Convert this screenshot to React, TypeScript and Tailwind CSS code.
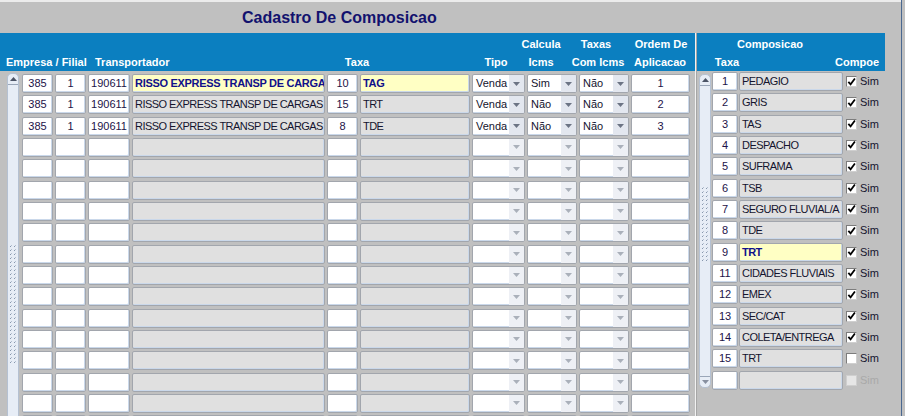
import React from 'react';

type Row = {
  emp: string;
  fil: string;
  tcod: string;
  tnome: string;
  taxa: string;
  taxaNome: string;
  tipo: string;
  calc: string;
  com: string;
  ordem: string;
  sel?: boolean;
};

const filled: Row[] = [
  { emp: '385', fil: '1', tcod: '190611', tnome: 'RISSO EXPRESS TRANSP DE CARGAS', taxa: '10', taxaNome: 'TAG', tipo: 'Venda', calc: 'Sim', com: 'Não', ordem: '1', sel: true },
  { emp: '385', fil: '1', tcod: '190611', tnome: 'RISSO EXPRESS TRANSP DE CARGAS', taxa: '15', taxaNome: 'TRT', tipo: 'Venda', calc: 'Não', com: 'Não', ordem: '2' },
  { emp: '385', fil: '1', tcod: '190611', tnome: 'RISSO EXPRESS TRANSP DE CARGAS', taxa: '8', taxaNome: 'TDE', tipo: 'Venda', calc: 'Não', com: 'Não', ordem: '3' },
];

const blank: Row = { emp: '', fil: '', tcod: '', tnome: '', taxa: '', taxaNome: '', tipo: '', calc: '', com: '', ordem: '' };

const rows: Row[] = [...filled, ...Array.from({ length: 14 }, () => blank)];

// taxa, nome, marcado, estado
const composicao: [string, string, boolean, ('sel' | 'off' | '')?][] = [
  ['1', 'PEDAGIO', true],
  ['2', 'GRIS', true],
  ['3', 'TAS', true],
  ['4', 'DESPACHO', true],
  ['5', 'SUFRAMA', true],
  ['6', 'TSB', true],
  ['7', 'SEGURO FLUVIAL/A', true],
  ['8', 'TDE', true],
  ['9', 'TRT', true, 'sel'],
  ['11', 'CIDADES FLUVIAIS', true],
  ['12', 'EMEX', true],
  ['13', 'SEC/CAT', true],
  ['14', 'COLETA/ENTREGA', true],
  ['15', 'TRT', false],
  ['', '', false, 'off'],
];

const cellBase =
  'flex h-[19px] shrink-0 items-center overflow-hidden whitespace-nowrap rounded-[2px] border border-[#a2a6ad] shadow-[inset_-1px_-1px_0_#cad8ea] text-[11px] leading-none';

// caixa alta fica mais estreita no original
const caps = 'tracking-[-0.55px]';
const selCaps = 'tracking-[-0.3px] bg-[#ffffc4] font-bold text-[#10108a]';
const grayCaps = 'tracking-[-0.55px] bg-[#e0e0e0] text-[#14142e]';

function Combo({ w, value }: { w: string; value: string }) {
  return (
    <div className={`${cellBase} ${w} bg-white`}>
      <span className="flex-1 pl-[3px] text-[#14142e]">{value}</span>
      <span className={`flex h-full w-[15px] items-center justify-center ${value ? 'bg-[#e3e7ef]' : 'bg-[#eef0f5]'}`}>
        <svg width="7" height="4" viewBox="0 0 7 4">
          <path d="M0 0h7L3.5 4z" fill={value ? '#6c7484' : '#aab0ba'} />
        </svg>
      </span>
    </div>
  );
}

function Grip({ id, h }: { id: string; h: number }) {
  return (
    <svg width="10" height={h} className="self-center">
      <defs>
        <pattern id={id} width="10" height="4" patternUnits="userSpaceOnUse">
          <rect x="2" y="2" width="1" height="1" fill="#8797ad" />
          <rect x="3" y="1" width="1" height="1" fill="#b4c0d0" />
          <rect x="6" y="2" width="1" height="1" fill="#8797ad" />
          <rect x="7" y="1" width="1" height="1" fill="#b4c0d0" />
        </pattern>
      </defs>
      <rect width="10" height={h} fill={`url(#${id})`} />
    </svg>
  );
}

function Arrow({ up, dim }: { up?: boolean; dim?: boolean }) {
  return (
    <svg width="7" height="4" viewBox="0 0 7 4">
      <path d={up ? 'M0 4h7L3.5 0z' : 'M0 0h7L3.5 4z'} fill={dim ? '#8890a0' : '#4c5466'} />
    </svg>
  );
}

function Check() {
  return (
    <svg width="10" height="10" viewBox="0 0 10 10">
      <path d="M1.5 4.8 4 7.6 8.8 1.2" fill="none" stroke="#000" strokeWidth="2" />
    </svg>
  );
}

export default function App() {
  return (
    <div className="flex h-[416px] w-[905px] overflow-hidden bg-[#c0c0c0] font-['Liberation_Sans',Arial,sans-serif]">
      <div className="flex w-[901px] flex-col">
        <div className="h-[2px] bg-[#ececec]" />
        <div className="h-[31px] pl-[242px] pt-[7px] text-[16px] font-bold leading-[18px] text-[#12126e]">
          Cadastro De Composicao
        </div>

        <div className="flex h-[383px]">
          {/* bloco esquerdo */}
          <div className="flex w-[695px] flex-col">
            <div className="h-[38px] bg-[#0b7fc0] pt-[4px] text-[11px] font-bold leading-[14px] text-white">
              <div className="flex h-[14px]">
                <div className="w-[522px]" />
                <div className="flex w-[38px] justify-center whitespace-nowrap">Calcula</div>
                <div className="flex w-[72px] justify-center whitespace-nowrap">Taxas</div>
                <div className="flex w-[58px] justify-center whitespace-nowrap">Ordem De</div>
              </div>
              <div className="mt-[4px] flex h-[14px]">
                <div className="w-[92px] whitespace-nowrap pl-[6px]">Empresa / Filial</div>
                <div className="w-[238px] whitespace-nowrap pl-[3px]">Transportador</div>
                <div className="flex w-[54px] justify-center">Taxa</div>
                <div className="w-[86px]" />
                <div className="flex w-[52px] justify-center">Tipo</div>
                <div className="flex w-[38px] justify-center">Icms</div>
                <div className="flex w-[76px] justify-center whitespace-nowrap">Com Icms</div>
                <div className="flex w-[48px] justify-center">Aplicacao</div>
              </div>
            </div>

            <div className="flex h-[345px] overflow-hidden">
              <div className="w-[7px]" />
              <div className="mt-[2px] flex w-[12px] flex-col rounded-t-[5px] border border-b-0 border-[#b5c1d2] bg-[#e7edf6]">
                <div className="flex h-[11px] items-center justify-center border-b border-[#9aa6b8]">
                  <Arrow up />
                </div>
                <div className="h-[159px]" />
                <Grip id="gripL" h={120} />
              </div>
              <div className="w-[3px]" />
              <div className="flex flex-col pt-[3px]">
                {rows.map((r, i) => (
                  <div key={i} className="flex h-[21.33px] shrink-0 gap-[2px]">
                    <div className={`${cellBase} w-[31px] justify-center bg-white text-[#1c1248]`}>{r.emp}</div>
                    <div className={`${cellBase} w-[31px] justify-center bg-white text-[#1c1248]`}>{r.fil}</div>
                    <div className={`${cellBase} w-[42px] justify-center bg-white text-[#1c1248]`}>{r.tcod}</div>
                    <div className={`${cellBase} w-[193px] pl-[2px] ${r.sel ? selCaps : grayCaps}`}>{r.tnome}</div>
                    <div className={`${cellBase} w-[31px] justify-center bg-white text-[#1c1248]`}>{r.taxa}</div>
                    <div className={`${cellBase} w-[110px] pl-[2px] ${r.sel ? selCaps : grayCaps}`}>{r.taxaNome}</div>
                    <Combo w="w-[53px]" value={r.tipo} />
                    <Combo w="w-[50px]" value={r.calc} />
                    <Combo w="w-[50px]" value={r.com} />
                    <div className={`${cellBase} w-[59px] justify-center bg-white text-[#1c1248]`}>{r.ordem}</div>
                  </div>
                ))}
              </div>
            </div>
          </div>

          {/* separador */}
          <div className="w-[1px] bg-[#f2f2f2]" />
          <div className="w-[1px] bg-[#a6a6a6]" />

          {/* bloco direito */}
          <div className="flex w-[204px] flex-col">
            <div className="h-[38px] w-[188px] bg-[#0b7fc0] pt-[4px] text-[11px] font-bold leading-[14px] text-white">
              <div className="flex h-[14px] w-[146px] justify-center">Composicao</div>
              <div className="mt-[4px] flex h-[14px]">
                <div className="flex w-[60px] justify-center">Taxa</div>
                <div className="w-[74px]" />
                <div className="flex w-[52px] justify-center">Compoe</div>
              </div>
            </div>

            <div className="flex">
              <div className="w-[2px]" />
              <div className="mt-[3px] flex h-[314px] w-[12px] flex-col rounded-[5px] border border-[#b5c1d2] bg-[#e7edf6]">
                <div className="flex h-[11px] items-center justify-center border-b border-[#9aa6b8]">
                  <Arrow up />
                </div>
                <div className="h-[100px]" />
                <Grip id="gripR" h={77} />
                <div className="flex-1" />
                <div className="flex h-[11px] items-center justify-center border-t border-[#9aa6b8]">
                  <Arrow dim />
                </div>
              </div>
              <div className="w-[1px]" />
              <div className="flex flex-col pt-[1px]">
                {composicao.map(([taxa, nome, marcado, estado], i) => (
                  <div key={i} className="flex h-[21.33px] shrink-0 items-start">
                    <div className={`${cellBase} w-[26px] justify-center bg-white text-[#1c1248]`}>{taxa}</div>
                    <div className="w-[1px]" />
                    <div className={`${cellBase} ${caps} w-[104px] pl-[2px] ${estado === 'sel' ? selCaps : grayCaps}`}>
                      {nome}
                    </div>
                    <div className="flex h-[19px] items-center pl-[3px]">
                      <span
                        className={`flex h-[11px] w-[11px] items-center justify-center border ${
                          estado === 'off'
                            ? 'border-[#cfcfcf] bg-[#e6e6e6]'
                            : 'border-[#7c7c7c] border-r-[#cfcfcf] border-b-[#cfcfcf] bg-white'
                        }`}
                      >
                        {marcado && <Check />}
                      </span>
                      <span
                        className={`pl-[3px] text-[11px] leading-none ${
                          estado === 'off' ? 'text-[#a9a9a9]' : 'text-[#14142e]'
                        }`}
                      >
                        Sim
                      </span>
                    </div>
                  </div>
                ))}
              </div>
            </div>
          </div>
        </div>
      </div>
      <div className="w-[1px] bg-[#4a6890]" />
      <div className="flex-1 bg-[#c0c0c0]" />
    </div>
  );
}
